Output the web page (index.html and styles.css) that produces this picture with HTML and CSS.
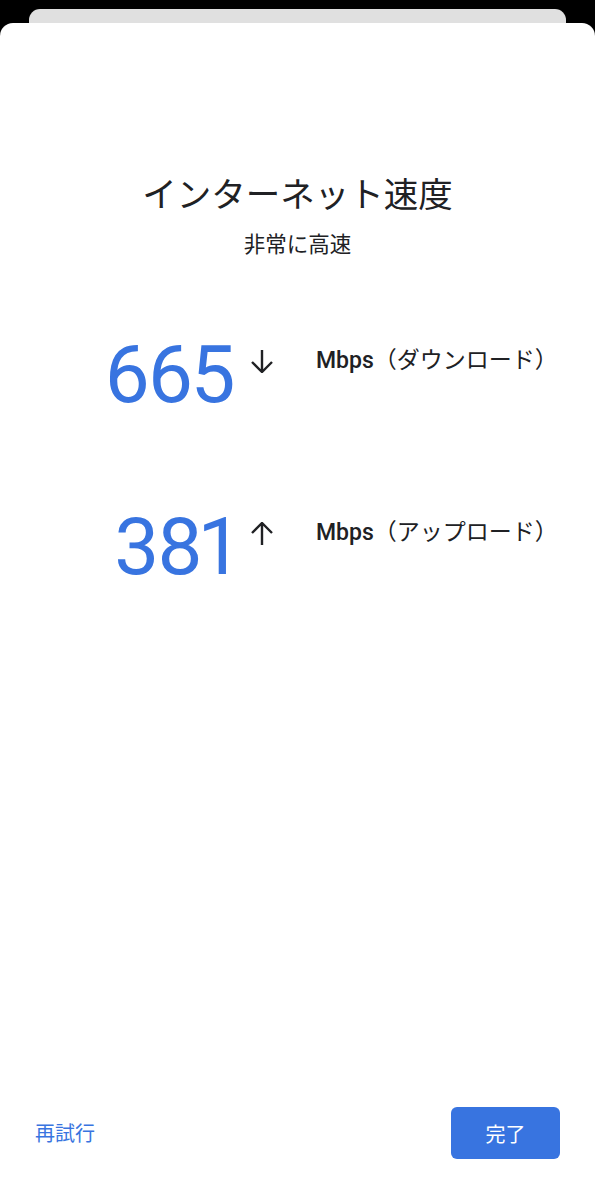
FILE: index.html
```html
<!DOCTYPE html>
<html lang="ja">
<head>
<meta charset="utf-8">
<link rel="stylesheet" href="styles.css">
</head>
<body>
<div class="back-card"></div>
<div class="sheet">
  <div class="content">
    <h1 class="title">インターネット速度</h1>
    <p class="subtitle">非常に高速</p>
    <div class="rows">
      <div class="row">
        <div class="num">665</div>
        <svg class="arrow" viewBox="0 0 22 23" width="22" height="23"><path d="M11 0V21.5M1 12L11 22L21 12" fill="none" stroke="#202124" stroke-width="2.4"/></svg>
        <div class="label"><span class="unit">Mbps</span>（ダウンロード）</div>
      </div>
      <div class="row">
        <div class="num">381</div>
        <svg class="arrow" viewBox="0 0 22 23" width="22" height="23"><path d="M11 23V1.5M1 11L11 1L21 11" fill="none" stroke="#202124" stroke-width="2.4"/></svg>
        <div class="label"><span class="unit">Mbps</span>（アップロード）</div>
      </div>
    </div>
  </div>
  <div class="footer">
    <span class="retry">再試行</span>
    <span class="done">完了</span>
  </div>
</div>
</body>
</html>
```
FILE: styles.css
```css
html, body {
  margin: 0;
  padding: 0;
  background: #000;
}
body {
  width: 595px;
  height: 1200px;
  overflow: hidden;
  font-family: "Noto Sans CJK JP", "Noto Sans", sans-serif;
  color: #202124;
}
.back-card {
  margin: 9px 29px 0;
  height: 14px;
  background: #e0e0e0;
  border-radius: 11px 11px 0 0;
}
.sheet {
  height: 1177px;
  background: #fff;
  border-radius: 13px 13px 0 0;
  display: flex;
  flex-direction: column;
  justify-content: space-between;
}
.content {
  padding-top: 147px;
  display: flex;
  flex-direction: column;
  align-items: center;
}
.title {
  margin: 0;
  font-size: 34.5px;
  line-height: 44px;
  font-weight: 400;
  color: #202124;
}
.subtitle {
  margin: 15px 0 0;
  font-size: 21.5px;
  line-height: 28px;
  color: #202124;
}
.rows {
  align-self: stretch;
  margin-top: 78px;
  display: flex;
  flex-direction: column;
  gap: 92px;
}
.row {
  display: grid;
  grid-template-columns: 233px 18px 22px 1fr;
  align-items: start;
  height: 80px;
}
.num {
  grid-column: 1;
  text-align: right;
  font-family: Roboto, sans-serif;
  font-variant-numeric: proportional-nums;
  font-size: 80px;
  line-height: 80px;
  letter-spacing: -2.5px;
  color: #3874e0;
}
.arrow {
  grid-column: 3;
  margin-top: 15px;
  display: block;
}
.label {
  grid-column: 4;
  margin-left: 43px;
  margin-top: 8px;
  font-size: 23px;
  line-height: 30px;
  white-space: nowrap;
  color: #202124;
}
.unit {
  font-family: Roboto, sans-serif;
  font-weight: 500;
}
.footer {
  display: flex;
  justify-content: space-between;
  align-items: center;
  padding: 0 35px 41px;
}
.retry {
  font-size: 20px;
  line-height: 28px;
  color: #3874e0;
}
.done {
  width: 109px;
  height: 52px;
  border-radius: 6px;
  background: #3874e0;
  color: #fff;
  font-size: 20px;
  display: flex;
  align-items: center;
  justify-content: center;
}
```
